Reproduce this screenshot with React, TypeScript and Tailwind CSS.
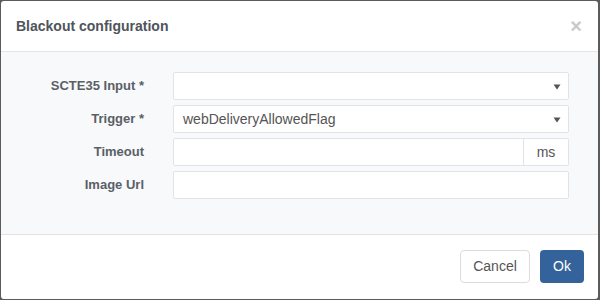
import React from "react";

function Caret() {
  return (
    <svg width="8" height="6" viewBox="0 0 8 6" className="absolute right-[7px] top-[11px]">
      <path d="M0.5 0.5 L7.5 0.5 L4 5.5 Z" fill="#555" />
    </svg>
  );
}

function Row({ label, children }: { label: string; children: React.ReactNode }) {
  return (
    <div className="flex items-center h-[28px]">
      <div className="w-[143px] text-right text-[13px] font-bold text-[#5a5f66]">{label}</div>
      <div className="ml-[29px] w-[396px] h-[28px]">{children}</div>
    </div>
  );
}

export default function App() {
  return (
    <div
      className="w-[600px] h-[300px] bg-[#5b5b5b] pt-px pl-px"
      style={{ fontFamily: '"Liberation Sans", Arial, sans-serif' }}
    >
      <div className="w-[597px] h-[298px] bg-white rounded-[3px] flex flex-col overflow-hidden">
        <div className="h-[51px] flex items-center justify-between pl-[15px] pr-[16px] border-b border-[#e5e5e5]">
          <div className="text-[14px] font-bold text-[#4f545b]">Blackout configuration</div>
          <div className="text-[20px] font-bold text-[#c9c9c9] leading-none">×</div>
        </div>
        <div className="bg-[#f8f9fb] h-[183px] pt-[20px] flex flex-col gap-[5px] border-b border-[#e3e3e3]">
          <Row label="SCTE35 Input *">
            <div className="relative h-full bg-white border border-[#e1e3e6] rounded-[2px]">
              <Caret />
            </div>
          </Row>
          <Row label="Trigger *">
            <div className="relative h-full bg-white border border-[#e1e3e6] rounded-[2px] flex items-center pl-[9px] text-[14px] text-[#555]">
              webDeliveryAllowedFlag
              <Caret />
            </div>
          </Row>
          <Row label="Timeout">
            <div className="h-full flex bg-white border border-[#e1e3e6] rounded-[2px]">
              <div className="flex-1" />
              <div className="w-[45px] border-l border-[#e1e3e6] flex items-center justify-center text-[14px] text-[#555]">ms</div>
            </div>
          </Row>
          <Row label="Image Url">
            <div className="h-full bg-white border border-[#e1e3e6] rounded-[2px]" />
          </Row>
        </div>
        <div className="flex-1 flex items-center justify-end pr-[14px] gap-[10px] pb-[1px]">
          <button className="h-[33px] w-[70px] bg-white border border-[#dcdcdc] rounded-[4px] text-[14px] text-[#555]">Cancel</button>
          <button className="h-[33px] w-[44px] bg-[#34639b] rounded-[4px] text-[14px] text-white">Ok</button>
        </div>
      </div>
    </div>
  );
}
